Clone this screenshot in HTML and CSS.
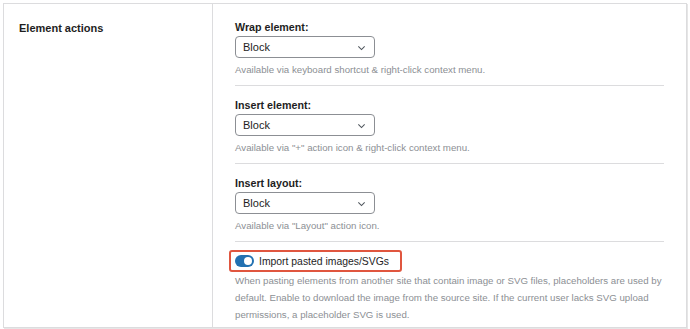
FILE: index.html
```html
<!DOCTYPE html>
<html lang="en">
<head>
    <meta charset="UTF-8">
    <title>Element actions</title>
    <link rel="stylesheet" href="styles.css">
</head>
<body>
    <div class="settings">
        <div class="settings-row">
            <!-- Row title -->
            <div class="row-title">Element actions</div>

            <!-- Row fields -->
            <div class="row-fields">
                <div class="field">
                    <div class="field-label">Wrap element:</div>
                    <div class="select">
                        <span>Block</span>
                        <svg class="chevron" viewBox="0 0 10 6" width="9" height="6"><path d="M1.5 1.2l3.5 3.5 3.5-3.5" fill="none" stroke="#50575e" stroke-width="1.2"/></svg>
                    </div>
                    <div class="help">Available via keyboard shortcut &amp; right-click context menu.</div>
                </div>

                <div class="field">
                    <div class="field-label">Insert element:</div>
                    <div class="select">
                        <span>Block</span>
                        <svg class="chevron" viewBox="0 0 10 6" width="9" height="6"><path d="M1.5 1.2l3.5 3.5 3.5-3.5" fill="none" stroke="#50575e" stroke-width="1.2"/></svg>
                    </div>
                    <div class="help">Available via "+" action icon &amp; right-click context menu.</div>
                </div>

                <div class="field">
                    <div class="field-label">Insert layout:</div>
                    <div class="select">
                        <span>Block</span>
                        <svg class="chevron" viewBox="0 0 10 6" width="9" height="6"><path d="M1.5 1.2l3.5 3.5 3.5-3.5" fill="none" stroke="#50575e" stroke-width="1.2"/></svg>
                    </div>
                    <div class="help">Available via "Layout" action icon.</div>
                </div>

                <div class="field field-last">
                    <div class="toggle-row">
                        <span class="toggle"><span class="knob"></span></span>
                        <span class="toggle-label">Import pasted images/SVGs</span>
                    </div>
                    <div class="help help-long">When pasting elements from another site that contain image or SVG files, placeholders are used by default. Enable to download the image from the source site. If the current user lacks SVG upload permissions, a placeholder SVG is used.</div>
                </div>
            </div>
        </div>
    </div>
</body>
</html>
```

FILE: styles.css
```css
body {
    margin: 0;
    padding: 3px;
    background-color: #fff;
    font-family: "Liberation Sans", Arial, sans-serif;
    color: #1e1e1e;
}

.settings {
    width: 682px;
    border: 1px solid #dcdcde;
    box-shadow: 1px 1px 0 #e6e6e6;
}

.settings-row {
    display: flex;
}

/* Left column */
.row-title {
    width: 193px;
    padding: 16px 0 0 15px;
    font-size: 11px;
    font-weight: bold;
    line-height: 16px;
    border-right: 1px solid #dcdcde;
}

/* Right column */
.row-fields {
    flex: 1;
    padding: 15px 22px 4px 22px;
}

.field {
    border-bottom: 1px solid #dcdcde;
    padding-bottom: 7px;
    margin-bottom: 11px;
}

.field-last {
    border-bottom: none;
    margin-bottom: 0;
    padding-bottom: 0;
    margin-top: -3px;
}

.field-label {
    font-size: 10.7px;
    font-weight: bold;
    line-height: 16px;
    margin-bottom: 1px;
}

.select {
    width: 123px;
    height: 20px;
    border: 1px solid #8c8f94;
    border-radius: 4px;
    padding: 0 8px 0 7px;
    display: flex;
    align-items: center;
    justify-content: space-between;
    font-size: 11px;
    color: #1e1e1e;
}

.chevron {
    margin-top: 1px;
}

.help {
    margin-top: 4px;
    font-size: 9.7px;
    line-height: 16px;
    color: #8c8f94;
}

.help-long {
    margin-top: 0;
    line-height: 17px;
}

/* Toggle row, outlined in red */
.toggle-row {
    display: inline-flex;
    align-items: center;
    gap: 5px;
    height: 18px;
    padding: 0 11px 0 4px;
    margin-left: -6px;
    border: 2px solid #e0563f;
    border-radius: 3px;
}

.toggle {
    width: 19px;
    height: 12px;
    border-radius: 6px;
    background-color: #2271b1;
    position: relative;
}

.toggle .knob {
    position: absolute;
    top: 2px;
    right: 2px;
    width: 8px;
    height: 8px;
    border-radius: 50%;
    background-color: #fff;
}

.toggle-label {
    font-size: 10.4px;
    color: #1e1e1e;
}
```
